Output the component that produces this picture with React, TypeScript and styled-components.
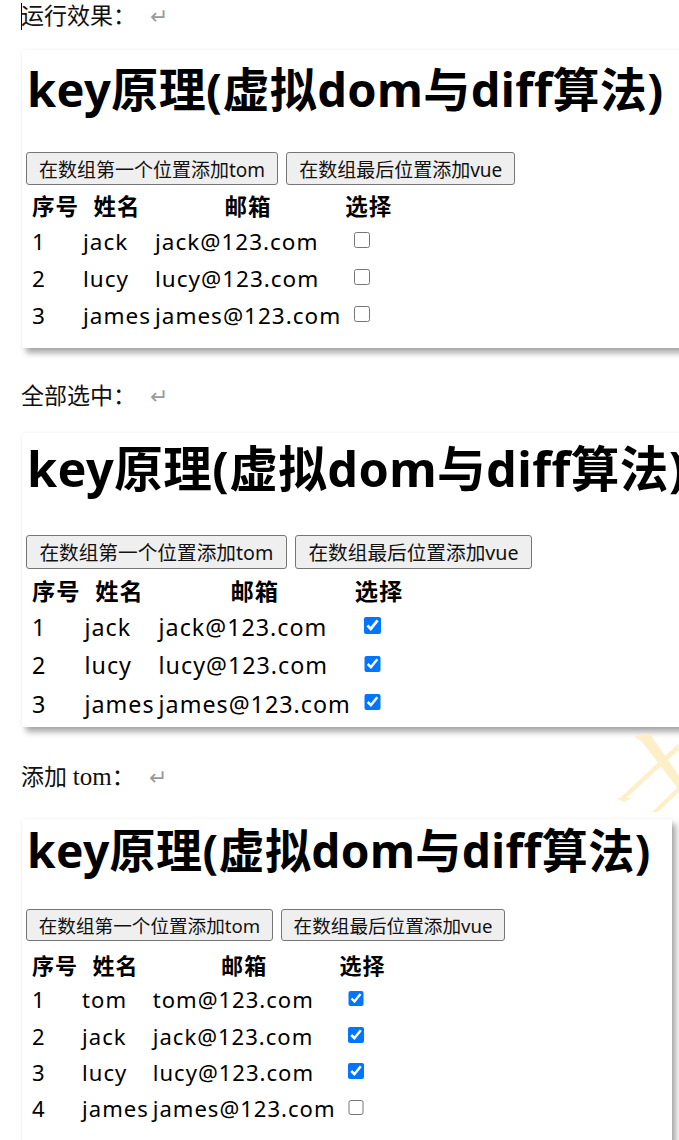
import { FC, ReactElement } from "react";
import styled, { createGlobalStyle } from "styled-components";

const GlobalStyle = createGlobalStyle`
    html, body {
        margin: 0;
        padding: 0;
        background: #ffffff;
        overflow-x: hidden;
    }
`;

const Page = styled.div`
    position: relative;
    width: 679px;
    min-height: 1140px;
    padding-left: 21px;
    box-sizing: border-box;
    overflow: hidden;
`;

const Caption = styled.p<{ $mt: number }>`
    margin: ${(p) => p.$mt}px 0 0 0;
    height: 34px;
    line-height: 34px;
    font-family: "Liberation Serif", "Noto Sans CJK SC", serif;
    font-size: 23px;
    color: #111;
    white-space: nowrap;

    .latin {
        font-size: 25px;
    }

    .return {
        color: #9a9a9a;
        font-size: 22px;
        margin-left: 14px;
    }
`;

const Caret = styled.span`
    display: inline-block;
    width: 0;
    height: 27px;
    border-left: 1px solid #000;
    vertical-align: -6px;
    margin-right: -1px;
`;

type CardProps = {
    $s: number,
    $mt: number,
    $pt: number,
    $pb: number,
    $gap: number,
    $width: number
}

const Card = styled.section<CardProps>`
    margin: ${(p) => p.$mt}px 0 0 1px;
    width: ${(p) => p.$width}px;
    padding: ${(p) => p.$pt}px 0 ${(p) => p.$pb}px 5px;
    box-sizing: border-box;
    background: #fff;
    box-shadow: 0 0 3px rgba(0, 0, 0, 0.06), 4px 5px 6px rgba(0, 0, 0, 0.34);
    font-family: "Noto Sans", "Noto Sans CJK SC", sans-serif;
    color: #000;

    h1 {
        margin: 0 0 ${(p) => p.$gap}px 0;
        font-size: ${(p) => 47 * p.$s}px;
        line-height: ${(p) => 53 * p.$s}px;
        font-weight: 700;
        white-space: nowrap;
        letter-spacing: ${(p) => 0.4 * p.$s}px;
    }
`;

const Toolbar = styled.div<{ $s: number }>`
    display: flex;
    gap: ${(p) => 8 * p.$s}px;
    margin-left: -1px;
`;

const Button = styled.button<{ $s: number }>`
    height: ${(p) => 33 * p.$s}px;
    padding: 0 ${(p) => 12 * p.$s}px;
    font-family: "Noto Sans", "Noto Sans CJK SC", sans-serif;
    font-size: ${(p) => 19 * p.$s}px;
    color: #111;
    background: #efefef;
    border: 1px solid #767676;
    border-radius: 3px;
    white-space: nowrap;
`;

const Table = styled.table<{ $s: number, $tm: number }>`
    margin: ${(p) => p.$tm}px 0 0 2px;
    border-spacing: 2px;
    font-size: ${(p) => 22.5 * p.$s}px;
    letter-spacing: 1px;

    th {
        padding: 0 1px;
        font-weight: 700;
        line-height: ${(p) => 31 * p.$s}px;
        text-align: center;
    }

    td {
        padding: 0 1px;
        line-height: ${(p) => 35 * p.$s}px;
        text-align: left;
        white-space: nowrap;
    }
`;

const Check = styled.input<{ $s: number }>`
    width: ${(p) => 16 * p.$s}px;
    height: ${(p) => 16 * p.$s}px;
    margin: 0 0 0 ${(p) => 9 * p.$s}px;
    vertical-align: ${(p) => 2 * p.$s}px;
    accent-color: #0075ff;
`;

const Watermark = styled.svg`
    position: absolute;
    left: 612px;
    top: 732px;
    pointer-events: none;
`;

type Person = {
    name: string,
    checked: boolean
}

type DemoProps = {
    people: Person[],
    s: number,
    mt: number,
    pt: number,
    pb: number,
    gap: number,
    tm: number,
    width: number
}

const Demo: FC<DemoProps> = ({ people, s, mt, pt, pb, gap, tm, width }: DemoProps): ReactElement => {
    return (
        <Card $s={s} $mt={mt} $pt={pt} $pb={pb} $gap={gap} $width={width}>
            <h1>key原理(虚拟dom与diff算法)</h1>
            <Toolbar $s={s}>
                <Button $s={s}>在数组第一个位置添加tom</Button>
                <Button $s={s}>在数组最后位置添加vue</Button>
            </Toolbar>
            <Table $s={s} $tm={tm}>
                <thead>
                    <tr>
                        <th>序号</th>
                        <th>姓名</th>
                        <th>邮箱</th>
                        <th>选择</th>
                    </tr>
                </thead>
                <tbody>
                    {people.map((person, index) => (
                        <tr key={person.name}>
                            <td>{index + 1}</td>
                            <td>{person.name}</td>
                            <td>{person.name}@123.com</td>
                            <td>
                                <Check $s={s} type="checkbox" checked={person.checked} readOnly />
                            </td>
                        </tr>
                    ))}
                </tbody>
            </Table>
        </Card>
    );
}

const list = (names: string[], checked: boolean[]): Person[] =>
    names.map((name, i) => ({ name, checked: checked[i] }));

export default function App(): ReactElement {
    return (
        <>
            <GlobalStyle />
            <Page>
                <Caption $mt={0}>
                    <Caret />运行效果：<span className="return">↵</span>
                </Caption>
                <Demo
                    people={list(["jack", "lucy", "james"], [false, false, false])}
                    s={1} mt={16} pt={13} pb={13} gap={36} tm={4} width={700}
                />

                <Caption $mt={32}>
                    全部选中：<span className="return">↵</span>
                </Caption>
                <Demo
                    people={list(["jack", "lucy", "james"], [true, true, true])}
                    s={1.035} mt={19} pt={8} pb={3} gap={39} tm={4} width={700}
                />

                <Caption $mt={33}>
                    添加 <span className="latin">tom</span>：<span className="return">↵</span>
                </Caption>
                <Demo
                    people={list(["tom", "jack", "lucy", "james"], [true, true, true, false])}
                    s={0.98} mt={25} pt={6} pb={24} gap={32} tm={7} width={650}
                />

                <Watermark width="67" height="80" viewBox="0 0 67 80">
                    <polygon points="22,4 38,2 67,44 67,58 30,10" fill="#fdf0c8" />
                    <polygon points="8,66 66,12 67,18 12,68" fill="#fdf0c8" />
                    <polygon points="4,66 20,66 12,70" fill="#fdf0c8" />
                    <polygon points="40,80 67,54 67,60 46,80" fill="#fdf0c8" />
                </Watermark>
            </Page>
        </>
    );
}
